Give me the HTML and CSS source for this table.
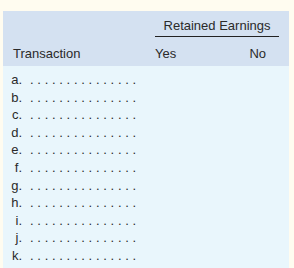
FILE: index.html
```html
<!DOCTYPE html>
<html>
<head>
<meta charset="utf-8">
<link rel="stylesheet" href="styles.css">
</head>
<body>
<div class="sheet">
  <div class="head">
    <div class="group-row">
      <div class="group-title">Retained Earnings</div>
    </div>
    <div class="col-row">
      <div class="c-trans">Transaction</div>
      <div class="c-yes">Yes</div>
      <div class="c-no">No</div>
    </div>
  </div>
  <div class="body">
    <div class="row"><span class="lbl">a.</span><span class="dots">. . . . . . . . . . . . . . .</span></div>
    <div class="row"><span class="lbl">b.</span><span class="dots">. . . . . . . . . . . . . . .</span></div>
    <div class="row"><span class="lbl">c.</span><span class="dots">. . . . . . . . . . . . . . .</span></div>
    <div class="row"><span class="lbl">d.</span><span class="dots">. . . . . . . . . . . . . . .</span></div>
    <div class="row"><span class="lbl">e.</span><span class="dots">. . . . . . . . . . . . . . .</span></div>
    <div class="row"><span class="lbl">f.</span><span class="dots">. . . . . . . . . . . . . . .</span></div>
    <div class="row"><span class="lbl">g.</span><span class="dots">. . . . . . . . . . . . . . .</span></div>
    <div class="row"><span class="lbl">h.</span><span class="dots">. . . . . . . . . . . . . . .</span></div>
    <div class="row"><span class="lbl">i.</span><span class="dots">. . . . . . . . . . . . . . .</span></div>
    <div class="row"><span class="lbl">j.</span><span class="dots">. . . . . . . . . . . . . . .</span></div>
    <div class="row"><span class="lbl">k.</span><span class="dots">. . . . . . . . . . . . . . .</span></div>
  </div>
</div>
</body>
</html>
```

FILE: styles.css
```css
html, body {
  margin: 0;
  padding: 0;
  background: #fffcf0;
}
body {
  font-family: "Liberation Sans", Arial, sans-serif;
  font-size: 13px;
  color: #2a2a2a;
  padding: 11px 5px 0 3px;
}
.sheet {
  width: 286px;
}
.head {
  background: #d4e1f1;
  padding: 7px 0 4px 0;
}
.group-row {
  display: flex;
  padding-left: 152px;
}
.group-title {
  width: 124px;
  text-align: center;
  line-height: 16px;
  padding-bottom: 2px;
  border-bottom: 1px solid #222;
}
.col-row {
  display: flex;
  margin-top: 9px;
  line-height: 16px;
}
.c-trans {
  width: 142px;
  padding-left: 10px;
}
.c-yes {
  flex: 1;
}
.c-no {
  padding-right: 23px;
}
.body {
  background: #e9f6fc;
  padding: 5px 0 4px 0;
}
.row {
  display: flex;
  height: 17.6px;
  line-height: 17.6px;
}
.lbl {
  width: 19px;
  text-align: right;
}
.dots {
  margin-left: 8px;
  word-spacing: 0.1px;
}
```
